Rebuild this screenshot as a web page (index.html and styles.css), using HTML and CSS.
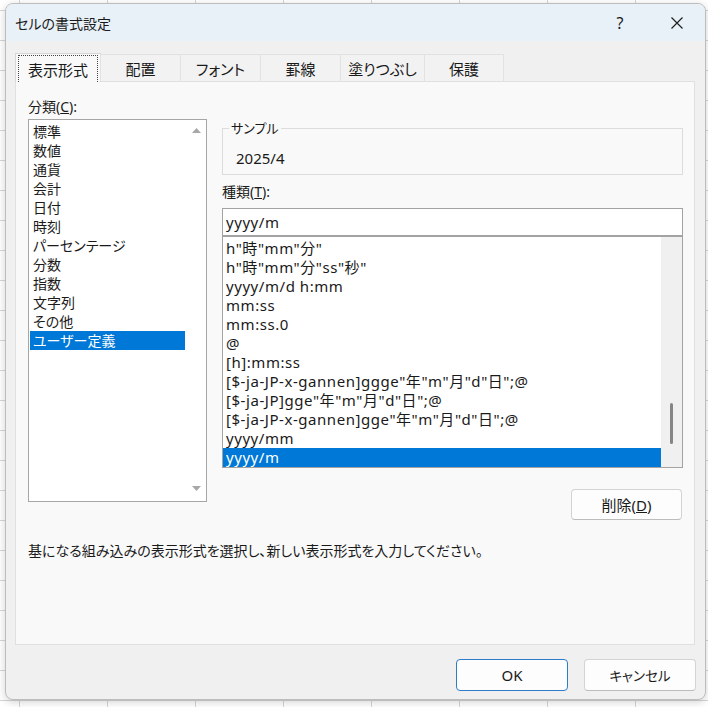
FILE: index.html
```html
<!DOCTYPE html>
<html lang="ja">
<head>
<meta charset="utf-8">
<title>セルの書式設定</title>
<link rel="stylesheet" href="styles.css">
</head>
<body>
<div class="dialog">
  <div class="titlebar">
    <span class="title">セルの書式設定</span>
    <span class="help">?</span>
    <span class="close"><svg width="12" height="12" viewBox="0 0 12 12"><path d="M0.5 0.5L11.5 11.5M11.5 0.5L0.5 11.5" stroke="#1f1f1f" stroke-width="1.2" fill="none"/></svg></span>
  </div>
  <div class="tabs">
    <div class="tab active w86"><span class="focus">表示形式</span></div>
    <div class="tab w81">配置</div>
    <div class="tab w81">フォント</div>
    <div class="tab w81">罫線</div>
    <div class="tab w85">塗りつぶし</div>
    <div class="tab w80">保護</div>
  </div>
  <div class="panel">
    <div class="cols">
      <div class="left">
        <div class="label">分類(<u>C</u>):</div>
        <div class="catlist">
          <div class="catitems">
            <div class="catitem">標準</div>
            <div class="catitem">数値</div>
            <div class="catitem">通貨</div>
            <div class="catitem">会計</div>
            <div class="catitem">日付</div>
            <div class="catitem">時刻</div>
            <div class="catitem">パーセンテージ</div>
            <div class="catitem">分数</div>
            <div class="catitem">指数</div>
            <div class="catitem">文字列</div>
            <div class="catitem">その他</div>
            <div class="catitem sel">ユーザー定義</div>
          </div>
          <div class="vscroll">
            <svg width="9" height="5" viewBox="0 0 9 5"><path d="M0 5L4.5 0L9 5Z" fill="#a8a8a8"/></svg>
            <svg width="9" height="5" viewBox="0 0 9 5"><path d="M0 0L4.5 5L9 0Z" fill="#a8a8a8"/></svg>
          </div>
        </div>
      </div>
      <div class="right">
        <fieldset class="sample">
          <legend>サンプル</legend>
          <div class="value">2025/4</div>
        </fieldset>
        <div class="label label2">種類(<u>T</u>):</div>
        <div class="fmtinput">yyyy/m</div>
        <div class="fmtlist">
          <div class="fmtitems">
            <div class="fmtitem">h"時"mm"分"</div>
            <div class="fmtitem">h"時"mm"分"ss"秒"</div>
            <div class="fmtitem">yyyy/m/d h:mm</div>
            <div class="fmtitem">mm:ss</div>
            <div class="fmtitem">mm:ss.0</div>
            <div class="fmtitem">@</div>
            <div class="fmtitem">[h]:mm:ss</div>
            <div class="fmtitem">[$-ja-JP-x-gannen]ggge"年"m"月"d"日";@</div>
            <div class="fmtitem">[$-ja-JP]gge"年"m"月"d"日";@</div>
            <div class="fmtitem">[$-ja-JP-x-gannen]gge"年"m"月"d"日";@</div>
            <div class="fmtitem">yyyy/mm</div>
            <div class="fmtitem sel">yyyy/m</div>
          </div>
          <div class="fmtscroll"><div class="thumb"></div></div>
        </div>
        <div class="btn delete">削除(<u>D</u>)</div>
      </div>
    </div>
    <div class="desc">基になる組み込みの表示形式を選択し、新しい表示形式を入力してください。</div>
  </div>
  <div class="footer">
    <div class="btn ok">OK</div>
    <div class="btn cancel">キャンセル</div>
  </div>
</div>
</body>
</html>
```
FILE: styles.css
```css
html, body {
  margin: 0;
  padding: 0;
}
body {
  width: 708px;
  height: 707px;
  overflow: hidden;
  background-color: #ffffff;
  background-image:
    linear-gradient(to right, #d6d6d6 1px, transparent 1px),
    linear-gradient(to bottom, #d6d6d6 1px, transparent 1px);
  background-size: 88px 30px;
  background-position: 19px 10px;
  font-family: "Noto Sans", "Noto Sans CJK JP", sans-serif;
  font-feature-settings: "palt";
  font-size: 14px;
  color: #1a1a1a;
}
.dialog {
  margin: 3px 0 0 5px;
  width: 701px;
  height: 697px;
  box-sizing: border-box;
  border: 1px solid #bdbdbd;
  border-radius: 8px;
  background: #f0f0f0;
  display: flex;
  flex-direction: column;
  overflow: hidden;
  box-shadow: 0 2px 8px rgba(0, 0, 0, 0.18);
}
.titlebar {
  height: 37px;
  flex: none;
  background: #e8f1f8;
  display: flex;
  align-items: center;
  padding-left: 9px;
}
.title {
  font-size: 14px;
}
.help {
  margin-left: auto;
  width: 40px;
  text-align: center;
  font-size: 16px;
}
.close {
  width: 46px;
  margin-left: 14px;
  margin-right: 5px;
  display: flex;
  justify-content: center;
  align-items: center;
}
.tabs {
  display: flex;
  align-items: flex-end;
  height: 28px;
  margin: 12px 0 0 9px;
  flex: none;
  position: relative;
  z-index: 1;
  font-size: 15px;
}
.tab {
  height: 27px;
  box-sizing: border-box;
  border: 1px solid #e2e2e2;
  border-bottom: none;
  margin-left: -1px;
  background: #f2f2f2;
  display: flex;
  align-items: center;
  justify-content: center;
}
.tab:first-child {
  margin-left: 0;
}
.tab.active {
  height: 29px;
  margin-bottom: -1px;
  background: #f9f9f9;
  border-color: #d6d6d6;
  padding: 1px 2px 0 2px;
  align-items: stretch;
}
.focus {
  flex: 1;
  border: 1px dotted #444;
  border-bottom: none;
  display: flex;
  align-items: center;
  justify-content: center;
}
.w86 { width: 86px; }
.w81 { width: 81px; }
.w85 { width: 85px; }
.w80 { width: 80px; }
.panel {
  height: 564px;
  flex: none;
  box-sizing: border-box;
  margin: 0 10px 0 9px;
  border: 1px solid #e0e0e0;
  background: #f9f9f9;
  padding: 15px 11px 0 12px;
}
.cols {
  display: flex;
  align-items: flex-start;
  gap: 15px;
}
.left {
  width: 179px;
  flex: none;
}
.label {
  height: 19px;
  line-height: 19px;
}
.catlist {
  margin-top: 3px;
  height: 383px;
  box-sizing: border-box;
  border: 1px solid #a6a6a6;
  background: #ffffff;
  display: flex;
}
.catitems {
  flex: 1;
  padding: 2px 1px 0 1px;
}
.catitem {
  height: 19px;
  line-height: 19px;
  padding-left: 3px;
  white-space: nowrap;
}
.sel {
  background: #0078d7;
  color: #ffffff;
}
.vscroll {
  width: 20px;
  flex: none;
  display: flex;
  flex-direction: column;
  justify-content: space-between;
  align-items: center;
  padding: 8px 0 10px 0;
}
.right {
  flex: 1;
  min-width: 0;
  padding-top: 22px;
  display: flex;
  flex-direction: column;
}
.sample {
  margin: 0;
  height: 56px;
  box-sizing: border-box;
  border: 1px solid #dcdcdc;
  padding: 12px 13px 0 13px;
  min-width: 0;
}
.sample legend {
  padding: 0 2px;
  margin-left: -7px;
  line-height: 18px;
  font-size: 13px;
}
.value {
  line-height: 19px;
  font-size: 15px;
}
.label2 {
  margin-top: 7px;
}
.fmtinput {
  margin-top: 7px;
  height: 28px;
  box-sizing: border-box;
  border: 1px solid #a3a3a3;
  background: #ffffff;
  padding-left: 3px;
  line-height: 26px;
  font-size: 15px;
  letter-spacing: 0.55px;
}
.fmtlist {
  height: 232px;
  box-sizing: border-box;
  border: 1px solid #a3a3a3;
  background: #ffffff;
  display: flex;
  font-size: 15px;
  letter-spacing: 0.55px;
}
.fmtitems {
  flex: 1;
  min-width: 0;
  padding-top: 2px;
  overflow: hidden;
}
.fmtitem {
  height: 19px;
  line-height: 19px;
  padding-left: 3px;
  white-space: nowrap;
}
.fmtscroll {
  width: 21px;
  flex: none;
  background: #f0f0f0;
}
.thumb {
  margin: 166px 0 0 9px;
  width: 3px;
  height: 41px;
  border-radius: 2px;
  background: #858585;
}
.btn {
  width: 112px;
  height: 32px;
  box-sizing: border-box;
  border: 1px solid #d3d3d3;
  border-bottom-color: #bcbcbc;
  border-radius: 4px;
  background: #fdfdfd;
  display: flex;
  align-items: center;
  justify-content: center;
  font-size: 15px;
}
.delete {
  align-self: flex-end;
  width: 111px;
  height: 31px;
  margin: 21px 1px 0 0;
}
.cancel {
  font-size: 13.5px;
}
.desc {
  margin-top: 21px;
  line-height: 19px;
}
.footer {
  flex: 1;
  display: flex;
  justify-content: flex-end;
  align-items: flex-start;
  gap: 16px;
  padding: 14px 9px 0 0;
}
.btn.ok {
  border-color: #2f7cc6;
}
```
